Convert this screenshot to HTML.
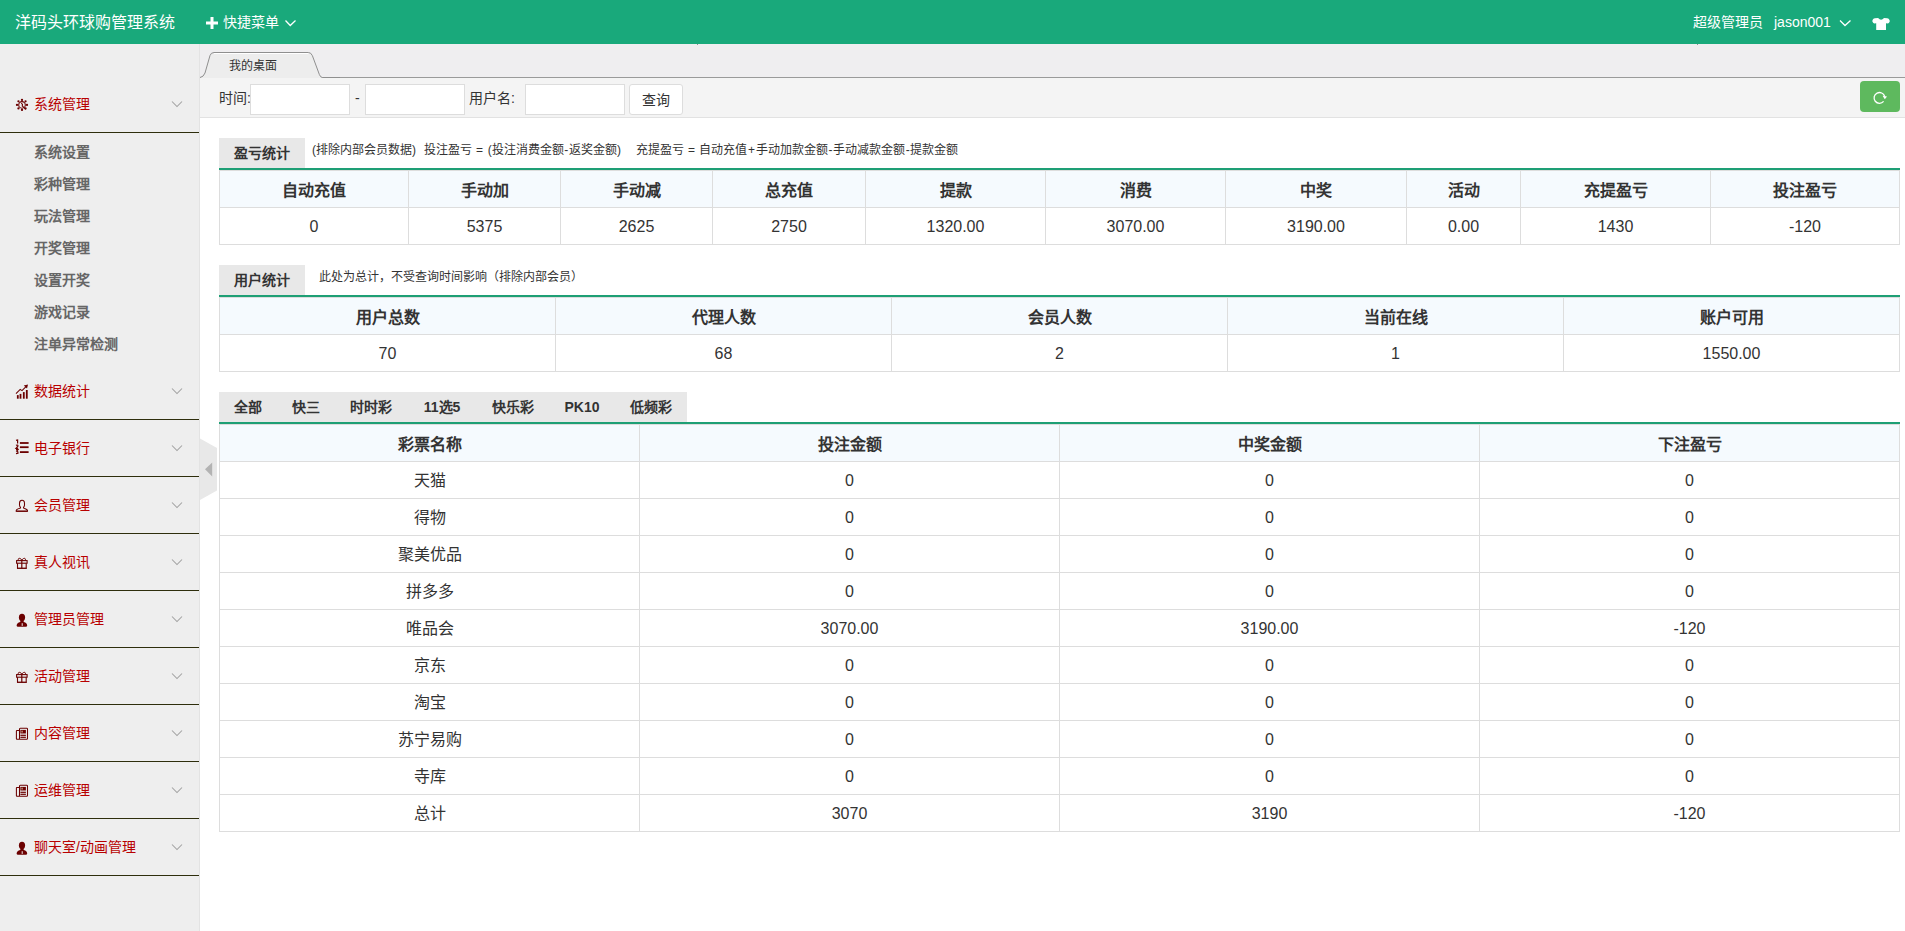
<!DOCTYPE html>
<html lang="zh-CN"><head><meta charset="utf-8">
<style>
*{margin:0;padding:0;box-sizing:border-box}
html,body{width:1905px;height:931px;overflow:hidden;background:#fff;font-family:"Liberation Sans",sans-serif;color:#333;font-size:12px}
.abs{position:absolute}
svg{position:absolute;overflow:visible}
#hd{left:0;top:0;width:1905px;height:44px;background:#19a97b;color:#fff}
#hd .t{left:15px;top:12px;font-size:16px;line-height:22px;white-space:nowrap}
#hd .q{left:223px;top:12px;font-size:14px;line-height:20px;white-space:nowrap}
#hd .u{left:1693px;top:12px;font-size:14px;line-height:20px;white-space:nowrap}
#hd .u2{left:1774px;top:12px;font-size:14px;line-height:20px;white-space:nowrap}
#side{left:0;top:44px;width:200px;height:887px;background:#eeeeee;border-right:1px solid #e3e3e3}
.dt{position:absolute;left:0;width:199px;height:57px;border-bottom:1px solid #2e2e0c;color:#b80000;font-size:14px}
.dt .tx{position:absolute;left:34px;top:18px;font-weight:500;line-height:20px;white-space:nowrap}
.dd{position:absolute;left:34px;font-size:14px;font-weight:bold;color:#666;line-height:20px;white-space:nowrap}
#tabnav{left:200px;top:44px;width:1705px;height:34px;background:#efeef0;border-bottom:1px solid #9a9a9a}
#qbar{left:200px;top:78px;width:1705px;height:40px;background:#f4f4f4;border-bottom:1px solid #e2e2e2}
.inp{position:absolute;top:6px;height:31px;width:100px;background:#fff;border:1px solid #ddd}
.lbl{position:absolute;top:11px;font-size:14px;line-height:18px;white-space:nowrap}
.btn{position:absolute;left:429px;top:6px;width:54px;height:31px;background:#fff;border:1px solid #ddd;border-radius:3px;font-size:14px;line-height:31px;text-align:center}
.rbtn{position:absolute;left:1660px;top:3px;width:40px;height:31px;background:#5eb95e;border-radius:4px}
.tab{position:absolute;height:30px;background:#e8e8e8;font-size:14px;font-weight:bold;line-height:30px;text-align:center;white-space:nowrap}
.tab span{display:inline-block;text-align:center}
.gl{position:absolute;left:219px;width:1681px;height:2px;background:#1e9f75;z-index:2}
i.w{display:inline-block;font-style:normal;text-align:center}
.desc{position:absolute;font-size:12px;line-height:16px;white-space:nowrap;color:#333}
table{position:absolute;left:219px;border-collapse:collapse;table-layout:fixed}
td,th{border:1px solid #ddd;text-align:center;height:37px;padding:1px 0 0 0;font-size:16px;color:#333;white-space:nowrap}
th{background:#f5fafe;font-weight:bold;padding-top:0}
td{background:#fff}
.cj{position:relative;top:-2px}
</style></head><body>
<div id="hd" class="abs">
  <div class="abs t">洋码头环球购管理系统</div>
  <svg style="left:206px;top:17px" width="12" height="12"><rect x="0" y="4.5" width="12" height="3" fill="#fff"/><rect x="4.5" y="0" width="3" height="12" fill="#fff"/></svg>
  <div class="abs q">快捷菜单</div>
  <svg style="left:285px;top:20px" width="11" height="7"><polyline points="0.5,0.5 5.25,5.5 10.5,0.5" fill="none" stroke="#fff" stroke-width="1.3"/></svg>
  <div class="abs u">超级管理员</div>
  <div class="abs u2">jason001</div>
  <svg style="left:1840px;top:20px" width="11" height="7"><polyline points="0,0.5 5,5.5 10.5,0.5" fill="none" stroke="#fff" stroke-width="1.3"/></svg>
  <svg style="left:1872px;top:18px" width="18" height="12"><path d="M2.8,0.2 Q1.2,0.5 0.6,2 L0.3,3.2 Q1,5 2.2,5.6 L4.2,5.2 L4.2,12 L14,12 L14,5.2 L16,5.6 Q17.2,5 17.8,3.2 L17.5,2 Q16.9,0.5 15.3,0.2 L12,0 Q9.1,3.4 6.1,0 Z" fill="#fff"/></svg>
</div>

<div id="side" class="abs">
  <div class="dt" style="top:32px"><span class="tx">系统管理</span></div>
  <div class="dd" style="top:98px">系统设置</div>
  <div class="dd" style="top:130px">彩种管理</div>
  <div class="dd" style="top:162px">玩法管理</div>
  <div class="dd" style="top:194px">开奖管理</div>
  <div class="dd" style="top:226px">设置开奖</div>
  <div class="dd" style="top:258px">游戏记录</div>
  <div class="dd" style="top:290px">注单异常检测</div>
  <div class="dt" style="top:319px"><span class="tx">数据统计</span></div>
  <div class="dt" style="top:376px"><span class="tx">电子银行</span></div>
  <div class="dt" style="top:433px"><span class="tx">会员管理</span></div>
  <div class="dt" style="top:490px"><span class="tx">真人视讯</span></div>
  <div class="dt" style="top:547px"><span class="tx">管理员管理</span></div>
  <div class="dt" style="top:604px"><span class="tx">活动管理</span></div>
  <div class="dt" style="top:661px"><span class="tx">内容管理</span></div>
  <div class="dt" style="top:718px"><span class="tx">运维管理</span></div>
  <div class="dt" style="top:775px"><span class="tx">聊天室/动画管理</span></div>
</div>
<!--ICONS-->
<svg style="left:15px;top:98px" width="14" height="14"><g transform="translate(7,6.9)"><circle cx="5.00" cy="0.00" r="1.15" fill="#6b0000"/><circle cx="3.54" cy="3.54" r="1.15" fill="#6b0000"/><circle cx="0.00" cy="5.00" r="1.15" fill="#6b0000"/><circle cx="-3.54" cy="3.54" r="1.15" fill="#6b0000"/><circle cx="-5.00" cy="0.00" r="1.15" fill="#6b0000"/><circle cx="-3.54" cy="-3.54" r="1.15" fill="#6b0000"/><circle cx="-0.00" cy="-5.00" r="1.15" fill="#6b0000"/><circle cx="3.54" cy="-3.54" r="1.15" fill="#6b0000"/><circle cx="0" cy="0" r="3.3" fill="none" stroke="#6b0000" stroke-width="1.1"/><path d="M-0.8,-1.6 Q1.2,-0.6 0.2,1 L3.8,4.4" stroke="#6b0000" stroke-width="1.1" fill="none"/></g></svg>
<svg style="left:15px;top:384px" width="14" height="15"><rect x="1.9" y="11.1" width="1.8" height="3.6" fill="#6b0000"/><rect x="4.6" y="9.9" width="1.8" height="4.8" fill="#6b0000"/><rect x="7.9" y="8.1" width="1.8" height="6.6" fill="#6b0000"/><rect x="10.9" y="6" width="1.8" height="8.7" fill="#6b0000"/><polyline points="1,9.6 5.2,5.4 7,6.6 11,2.6" fill="none" stroke="#6b0000" stroke-width="1.05"/><path d="M13,0.6 L8.8,1.6 L12,4.6 Z" fill="#6b0000"/></svg>
<svg style="left:15px;top:439px" width="14" height="16"><rect x="4.9" y="3.1" width="8.7" height="1.8" fill="#6b0000"/><rect x="4.9" y="7.3" width="8.7" height="1.8" fill="#6b0000"/><rect x="4.9" y="12.2" width="8.7" height="1.8" fill="#6b0000"/><path d="M1,1.4 L2.6,1 L2.6,4.4" fill="none" stroke="#6b0000" stroke-width="1.2"/><path d="M1,6.4 Q3,5.4 3,7 L1,9.4 L3.2,9.4" fill="none" stroke="#6b0000" stroke-width="1.2"/><path d="M1,10.6 L3,10.6 L1.8,12.2 Q3.4,12.6 3,14.2 L1,14.6" fill="none" stroke="#6b0000" stroke-width="1.2"/></svg>
<svg style="left:15px;top:499px" width="14" height="14"><path d="M7,1.3 C5.2,1.3 4.5,2.6 4.5,4.4 L4.5,6 C4.5,7 5,7.8 5.5,8.3 L5.5,8.9 C3,9.6 1.2,10.3 1.2,11.6 L1.2,12.2 L12.5,12.2 L12.5,11.6 C12.5,10.3 10.7,9.6 8.5,8.9 L8.5,8.3 C9,7.8 9.5,7 9.5,6 L9.5,4.4 C9.5,2.6 8.8,1.3 7,1.3 Z" fill="none" stroke="#6b0000" stroke-width="1.05"/><rect x="1.2" y="11.6" width="11.3" height="1.2" fill="#6b0000"/></svg>
<svg style="left:16px;top:557px" width="13" height="13"><path d="M5.85,3.2 C4.6,0.6 1.6,0.8 2.3,3.2 M5.85,3.2 C7.1,0.6 10.1,0.8 9.4,3.2" fill="none" stroke="#6b0000" stroke-width="1"/><rect x="0.6" y="3.6" width="10.5" height="2.6" fill="none" stroke="#6b0000" stroke-width="1.1"/><path d="M1.5,6.2 L1.5,11.3 L10.2,11.3 L10.2,6.2" fill="none" stroke="#6b0000" stroke-width="1.1"/><rect x="1" y="10.8" width="9.7" height="1" fill="#6b0000"/><rect x="5.2" y="3" width="1.2" height="8.3" fill="#6b0000"/></svg>
<svg style="left:16px;top:613px" width="12" height="14"><ellipse cx="6" cy="4.4" rx="3.1" ry="3.7" fill="#6b0000"/><path d="M4.6,7.4 L7.4,7.4 L7.8,9.1 Q11,9.6 11.2,12.6 Q11.2,13.7 10.2,13.7 L1.6,13.7 Q0.6,13.7 0.6,12.6 Q0.9,9.6 4.2,9.1 Z" fill="#6b0000"/><rect x="5.6" y="10.2" width="1.3" height="2.7" fill="#d2b4b4"/></svg>
<svg style="left:16px;top:671px" width="13" height="13"><path d="M5.85,3.2 C4.6,0.6 1.6,0.8 2.3,3.2 M5.85,3.2 C7.1,0.6 10.1,0.8 9.4,3.2" fill="none" stroke="#6b0000" stroke-width="1"/><rect x="0.6" y="3.6" width="10.5" height="2.6" fill="none" stroke="#6b0000" stroke-width="1.1"/><path d="M1.5,6.2 L1.5,11.3 L10.2,11.3 L10.2,6.2" fill="none" stroke="#6b0000" stroke-width="1.1"/><rect x="1" y="10.8" width="9.7" height="1" fill="#6b0000"/><rect x="5.2" y="3" width="1.2" height="8.3" fill="#6b0000"/></svg>
<svg style="left:15px;top:727px" width="14" height="14"><path d="M4.5,12.3 L4.5,2.1 Q4.5,1.3 5.3,1.3 L11.7,1.3 Q12.5,1.3 12.5,2.1 L12.5,11.5 Q12.5,12.3 11.7,12.3 L2.2,12.3 Q1.4,12.3 1.4,11.5 L1.4,3.9 Q1.4,3.4 1.9,3.4 L4.5,3.4" fill="none" stroke="#6b0000" stroke-width="1.05"/><rect x="5.4" y="2.9" width="5.5" height="3.6" fill="#6b0000"/><rect x="6.4" y="3.7" width="1.4" height="1.8" fill="#c89a80"/><rect x="5.4" y="7.7" width="5.5" height="1.2" fill="#6b0000"/><rect x="5.4" y="9.7" width="5.5" height="1.2" fill="#6b0000"/></svg>
<svg style="left:15px;top:784px" width="14" height="14"><path d="M4.5,12.3 L4.5,2.1 Q4.5,1.3 5.3,1.3 L11.7,1.3 Q12.5,1.3 12.5,2.1 L12.5,11.5 Q12.5,12.3 11.7,12.3 L2.2,12.3 Q1.4,12.3 1.4,11.5 L1.4,3.9 Q1.4,3.4 1.9,3.4 L4.5,3.4" fill="none" stroke="#6b0000" stroke-width="1.05"/><rect x="5.4" y="2.9" width="5.5" height="3.6" fill="#6b0000"/><rect x="6.4" y="3.7" width="1.4" height="1.8" fill="#c89a80"/><rect x="5.4" y="7.7" width="5.5" height="1.2" fill="#6b0000"/><rect x="5.4" y="9.7" width="5.5" height="1.2" fill="#6b0000"/></svg>
<svg style="left:16px;top:841px" width="12" height="14"><ellipse cx="6" cy="4.4" rx="3.1" ry="3.7" fill="#6b0000"/><path d="M4.6,7.4 L7.4,7.4 L7.8,9.1 Q11,9.6 11.2,12.6 Q11.2,13.7 10.2,13.7 L1.6,13.7 Q0.6,13.7 0.6,12.6 Q0.9,9.6 4.2,9.1 Z" fill="#6b0000"/><rect x="5.6" y="10.2" width="1.3" height="2.7" fill="#d2b4b4"/></svg>
<svg style="left:172px;top:101px" width="10" height="6"><polyline points="0,0.5 5,5.5 10,0.5" fill="none" stroke="#a0a0a0" stroke-width="1.05"/></svg>
<svg style="left:172px;top:388px" width="10" height="6"><polyline points="0,0.5 5,5.5 10,0.5" fill="none" stroke="#a0a0a0" stroke-width="1.05"/></svg>
<svg style="left:172px;top:445px" width="10" height="6"><polyline points="0,0.5 5,5.5 10,0.5" fill="none" stroke="#a0a0a0" stroke-width="1.05"/></svg>
<svg style="left:172px;top:502px" width="10" height="6"><polyline points="0,0.5 5,5.5 10,0.5" fill="none" stroke="#a0a0a0" stroke-width="1.05"/></svg>
<svg style="left:172px;top:559px" width="10" height="6"><polyline points="0,0.5 5,5.5 10,0.5" fill="none" stroke="#a0a0a0" stroke-width="1.05"/></svg>
<svg style="left:172px;top:616px" width="10" height="6"><polyline points="0,0.5 5,5.5 10,0.5" fill="none" stroke="#a0a0a0" stroke-width="1.05"/></svg>
<svg style="left:172px;top:673px" width="10" height="6"><polyline points="0,0.5 5,5.5 10,0.5" fill="none" stroke="#a0a0a0" stroke-width="1.05"/></svg>
<svg style="left:172px;top:730px" width="10" height="6"><polyline points="0,0.5 5,5.5 10,0.5" fill="none" stroke="#a0a0a0" stroke-width="1.05"/></svg>
<svg style="left:172px;top:787px" width="10" height="6"><polyline points="0,0.5 5,5.5 10,0.5" fill="none" stroke="#a0a0a0" stroke-width="1.05"/></svg>
<svg style="left:172px;top:844px" width="10" height="6"><polyline points="0,0.5 5,5.5 10,0.5" fill="none" stroke="#a0a0a0" stroke-width="1.05"/></svg>
<!--/ICONS-->
<div id="tabnav" class="abs"></div>
<svg style="left:200px;top:44px" width="140" height="34"><path d="M0,34 L0,33.5 Q3.5,33 5,29 L10,11.5 Q11,8.5 14,8.5 L108.5,8.5 Q111,8.5 112.4,11.7 L119.4,30.6 Q120.5,33.5 122.5,33.5 L122.5,34 Z" fill="#ededed"/><line x1="14" y1="9.5" x2="108" y2="9.5" stroke="#fff" stroke-width="1"/><path d="M0,33.5 Q3.5,33 5,29 L10,11.5 Q11,8.5 14,8.5 L108.5,8.5 Q111,8.5 112.4,11.7 L119.4,30.6 Q120.5,33.5 122.5,33.5 L140,33.5" fill="none" stroke="#8f8f8f" stroke-width="1"/></svg>
<div class="abs" style="left:229px;top:58px;font-size:12px;line-height:16px;white-space:nowrap">我的桌面</div>
<div id="qbar" class="abs">
  <div class="lbl" style="left:19px">时间:</div>
  <div class="inp" style="left:50px"></div>
  <div class="lbl" style="left:155px">-</div>
  <div class="inp" style="left:165px"></div>
  <div class="lbl" style="left:269px">用户名:</div>
  <div class="inp" style="left:325px"></div>
  <div class="btn">查询</div>
  <div class="rbtn"><svg style="left:13px;top:10px" width="15" height="14"><path d="M11.7,5.5 A5.4,5.4 0 1 0 10.6,10.4" fill="none" stroke="#fff" stroke-width="1.3"/><path d="M9.6,4.8 L14,5.4 L11.8,8.2 Z" fill="#fff"/></svg></div>
</div>
<div class="abs" style="left:697px;top:44px;width:1px;height:1px;background:#8f8f8f"></div><div class="abs" style="left:1697px;top:44px;width:1px;height:1px;background:#8f8f8f"></div>
<!-- collapse -->
<svg style="left:200px;top:438px" width="18" height="63"><path d="M0,0.5 L17,10 L17,52.5 L0,62 Z" fill="#e8e8e8"/><path d="M5,31.3 L12.2,24.5 L12.2,38.4 Z" fill="#b3b3b3"/></svg>

<!-- section 1 -->
<div class="tab" style="left:219px;top:138px;width:86px">盈亏统计</div>
<div class="desc" style="left:312px;top:142px">(排除内部会员数据)</div><div class="desc" style="left:423.5px;top:142px">投注盈亏<i class="w" style="width:16.2px">=</i>(投注消费金额<i class="w" style="width:5.2px">-</i>返奖金额)</div><div class="desc" style="left:635.5px;top:142px">充提盈亏<i class="w" style="width:15.8px">=</i>自动充值<i class="w" style="width:8.6px">+</i>手动加款金额<i class="w" style="width:5.2px">-</i>手动减款金额<i class="w" style="width:5.2px">-</i>提款金额</div>
<div class="gl" style="top:168px"></div>
<table style="top:170px;width:1680px">
<colgroup><col style="width:189px"><col style="width:152px"><col style="width:152px"><col style="width:153px"><col style="width:180px"><col style="width:180px"><col style="width:181px"><col style="width:114px"><col style="width:190px"><col style="width:189px"></colgroup>
<tr><th>自动充值</th><th>手动加</th><th>手动减</th><th>总充值</th><th>提款</th><th>消费</th><th>中奖</th><th>活动</th><th>充提盈亏</th><th>投注盈亏</th></tr>
<tr><td>0</td><td>5375</td><td>2625</td><td>2750</td><td>1320.00</td><td>3070.00</td><td>3190.00</td><td>0.00</td><td>1430</td><td>-120</td></tr>
</table>

<!-- section 2 -->
<div class="tab" style="left:219px;top:265px;width:86px">用户统计</div>
<div class="desc" style="left:319px;top:269px">此处为总计，不受查询时间影响（排除内部会员）</div>
<div class="gl" style="top:295px"></div>
<table style="top:297px;width:1680px">
<colgroup><col style="width:336px"><col style="width:336px"><col style="width:336px"><col style="width:336px"><col style="width:336px"></colgroup>
<tr><th>用户总数</th><th>代理人数</th><th>会员人数</th><th>当前在线</th><th>账户可用</th></tr>
<tr><td>70</td><td>68</td><td>2</td><td>1</td><td>1550.00</td></tr>
</table>

<!-- section 3 -->
<div class="tab" style="left:219px;top:392px;width:468px;text-align:left"><span style="width:58px">全部</span><span style="width:58px">快三</span><span style="width:72px">时时彩</span><span style="width:70px">11选5</span><span style="width:72px">快乐彩</span><span style="width:66px">PK10</span><span style="width:72px">低频彩</span></div>
<div class="gl" style="top:422px"></div>
<table style="top:424px;width:1680px">
<colgroup><col style="width:420px"><col style="width:420px"><col style="width:420px"><col style="width:420px"></colgroup>
<tr><th>彩票名称</th><th>投注金额</th><th>中奖金额</th><th>下注盈亏</th></tr>
<tr><td><span class="cj">天猫</span></td><td>0</td><td>0</td><td>0</td></tr>
<tr><td><span class="cj">得物</span></td><td>0</td><td>0</td><td>0</td></tr>
<tr><td><span class="cj">聚美优品</span></td><td>0</td><td>0</td><td>0</td></tr>
<tr><td><span class="cj">拼多多</span></td><td>0</td><td>0</td><td>0</td></tr>
<tr><td><span class="cj">唯品会</span></td><td>3070.00</td><td>3190.00</td><td>-120</td></tr>
<tr><td><span class="cj">京东</span></td><td>0</td><td>0</td><td>0</td></tr>
<tr><td><span class="cj">淘宝</span></td><td>0</td><td>0</td><td>0</td></tr>
<tr><td><span class="cj">苏宁易购</span></td><td>0</td><td>0</td><td>0</td></tr>
<tr><td><span class="cj">寺库</span></td><td>0</td><td>0</td><td>0</td></tr>
<tr><td><span class="cj">总计</span></td><td>3070</td><td>3190</td><td>-120</td></tr>
</table>
</body></html>
